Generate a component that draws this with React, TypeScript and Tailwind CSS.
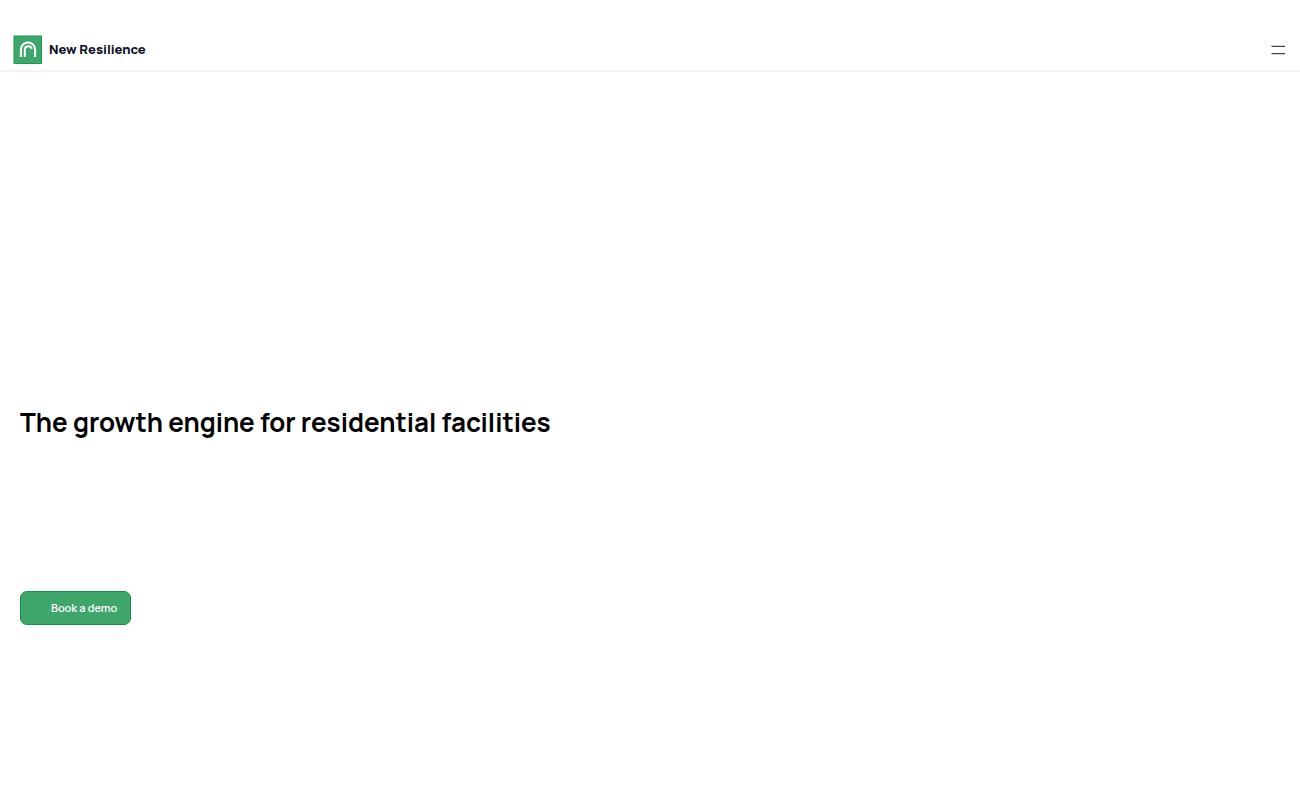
function LogoMark() {
  return (
    <svg viewBox="0 0 29 29" className="size-[29px]" fill="none" aria-hidden="true">
      <rect x="1" y="1" width="27.5" height="27.5" fill="#3fa66b" stroke="#1f9850" />
      <g stroke="#ffffff" strokeWidth="2">
        <path d="M7.9 22v-7.4a7.1 7.1 0 0 1 14.2 0V22" />
        <path d="M11.8 22v-7.2a3.5 3.5 0 0 1 6.9-.8" />
      </g>
    </svg>
  );
}

function Header() {
  return (
    <header className="flex h-18 items-end justify-between border-b-2 border-[#f3f3f3] px-[13px] pb-[6px]">
      <a href="#home" className="flex items-center gap-[7px]">
        <LogoMark />
        <span className="pb-[2px] text-[13px] leading-5 font-extrabold text-[#0b1020]">New Resilience</span>
      </a>
      <button type="button" aria-label="Open menu" className="flex h-[29px] items-center px-[2px]">
        <svg viewBox="0 0 14 10" className="h-[10px] w-[14px]" fill="none" stroke="#444444" aria-hidden="true">
          <path d="M0.5 1.3H14M0.5 8.7H14" strokeWidth="1.3" />
        </svg>
      </button>
    </header>
  );
}

function Hero() {
  return (
    <main className="flex flex-col items-start px-5 pt-[330px] pb-16">
      <h1 className="text-[26px] leading-10 font-bold text-black">
        The growth engine for residential facilities
      </h1>
      <a
        href="#demo"
        className="mt-[149px] flex h-[34px] items-center rounded-[7px] border border-[#14904a] bg-[#3fa66b] pr-[13px] pl-[30px] text-[11px] leading-4 font-semibold text-white"
      >
        Book a demo
      </a>
    </main>
  );
}

export default function App() {
  return (
    <div className="min-h-screen bg-white font-['Manrope','Inter',sans-serif]">
      <Header />
      <Hero />
    </div>
  );
}
